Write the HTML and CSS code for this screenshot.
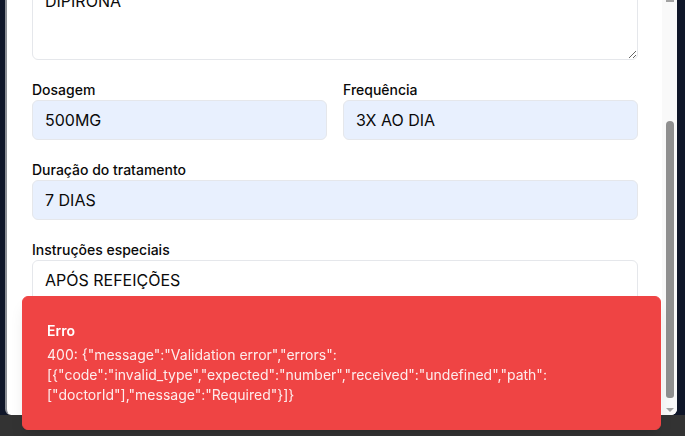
FILE: index.html
```html
<!DOCTYPE html>
<html lang="pt-BR">
<head>
<meta charset="utf-8">
<title>Prescrição</title>
<link rel="stylesheet" href="styles.css">
</head>
<body>
<div class="stage">
  <div class="modal">
    <div class="modal-body">
      <form class="form">
        <textarea class="field-area" readonly>DIPIRONA</textarea>
        <div class="row">
          <div class="field">
            <label class="label">Dosagem</label>
            <input class="input autofill" value="500MG" readonly>
          </div>
          <div class="field">
            <label class="label">Frequência</label>
            <input class="input autofill" value="3X AO DIA" readonly>
          </div>
        </div>
        <div class="field">
          <label class="label">Duração do tratamento</label>
          <input class="input autofill" value="7 DIAS" readonly>
        </div>
        <div class="field">
          <label class="label">Instruções especiais</label>
          <textarea class="input area-tall" readonly>APÓS REFEIÇÕES</textarea>
        </div>
      </form>
    </div>
    <div class="scrollbar">
      <div class="sb-up-tip"></div>
      <div class="sb-thumb"></div>
      <div class="sb-down"></div>
    </div>
  </div>
</div>
<div class="band"></div>

<div class="toast" role="alert">
  <div class="toast-title">Erro</div>
  <div class="toast-desc">400: {"message":"Validation error","errors":[{"code":"invalid_type","expected":"number","received":"undefined","path":["doctorId"],"message":"Required"}]}</div>
</div>
</body>
</html>
```
FILE: styles.css
```css
* { box-sizing: border-box; }
html, body {
  margin: 0;
  padding: 0;
}
body {
  width: 685px;
  height: 436px;
  overflow: hidden;
  background: #333333;
  font-family: Inter, "Noto Sans", sans-serif;
  color: #0a0a0a;
}
.stage {
  height: 415px;
  background: #0f1629;
  padding: 0 8px 0 5px;
}
.modal {
  height: 415px;
  display: flex;
  background: #ffffff;
  border-left: 2px solid #8b8e94;
  border-radius: 0 0 6px 6px;
  overflow: hidden;
}
.modal-body {
  flex: 1;
  min-width: 0;
  padding: 0 24px 0 25px;
  overflow: hidden;
}
.form {
  display: flex;
  flex-direction: column;
  gap: 20px;
  margin-top: -20px;
}
.field-area {
  display: block;
  width: 100%;
  height: 80px;
  padding: 8px 12px;
  border: 1px solid #e5e7eb;
  border-radius: 6px;
  background: #ffffff;
  font-family: inherit;
  font-size: 16px;
  line-height: 24px;
  color: #0a0a0a;
  resize: vertical;
  outline: none;
}
.row {
  display: grid;
  grid-template-columns: 1fr 1fr;
  gap: 16px;
}
.field {
  display: flex;
  flex-direction: column;
}
.label {
  font-size: 14px;
  line-height: 20px;
  font-weight: 500;
  color: #0a0a0a;
}
.input {
  display: block;
  width: 100%;
  height: 40px;
  padding: 0 12px;
  border: 1px solid #e5e7eb;
  border-radius: 6px;
  background: #ffffff;
  font-family: inherit;
  font-size: 16px;
  line-height: 24px;
  color: #0a0a0a;
  outline: none;
}
.autofill {
  background: #e8f0fe;
}
.area-tall {
  height: 80px;
  padding: 7px 12px;
  resize: none;
}
.scrollbar {
  width: 15px;
  flex: none;
  background: #f9f9f9;
  display: flex;
  flex-direction: column;
  align-items: center;
}
.sb-up-tip {
  width: 8px;
  height: 2px;
  background: #a3a3a3;
  margin-bottom: 119px;
}
.sb-thumb {
  width: 8px;
  height: 277px;
  background: #8f8f8f;
  border-radius: 4px 4px 3px 3px;
}
.sb-down {
  margin-top: 10px;
  width: 0;
  height: 0;
  border-left: 4px solid transparent;
  border-right: 4px solid transparent;
  border-top: 4px solid #a3a3a3;
}
.band {
  height: 21px;
  background: #333333;
}
.toast {
  position: fixed;
  left: 22px;
  top: 296px;
  width: 639px;
  display: grid;
  gap: 4px;
  padding: 24px 32px 24px 24px;
  background: #ef4444;
  border: 1px solid #ef4444;
  border-radius: 6px;
  box-shadow: 0 10px 15px -3px rgba(0,0,0,0.1), 0 4px 6px -4px rgba(0,0,0,0.1);
  color: #ffffff;
}
.toast-title {
  font-size: 14px;
  line-height: 20px;
  font-weight: 600;
}
.toast-desc {
  font-size: 14px;
  line-height: 20px;
  opacity: 0.9;
}
```
